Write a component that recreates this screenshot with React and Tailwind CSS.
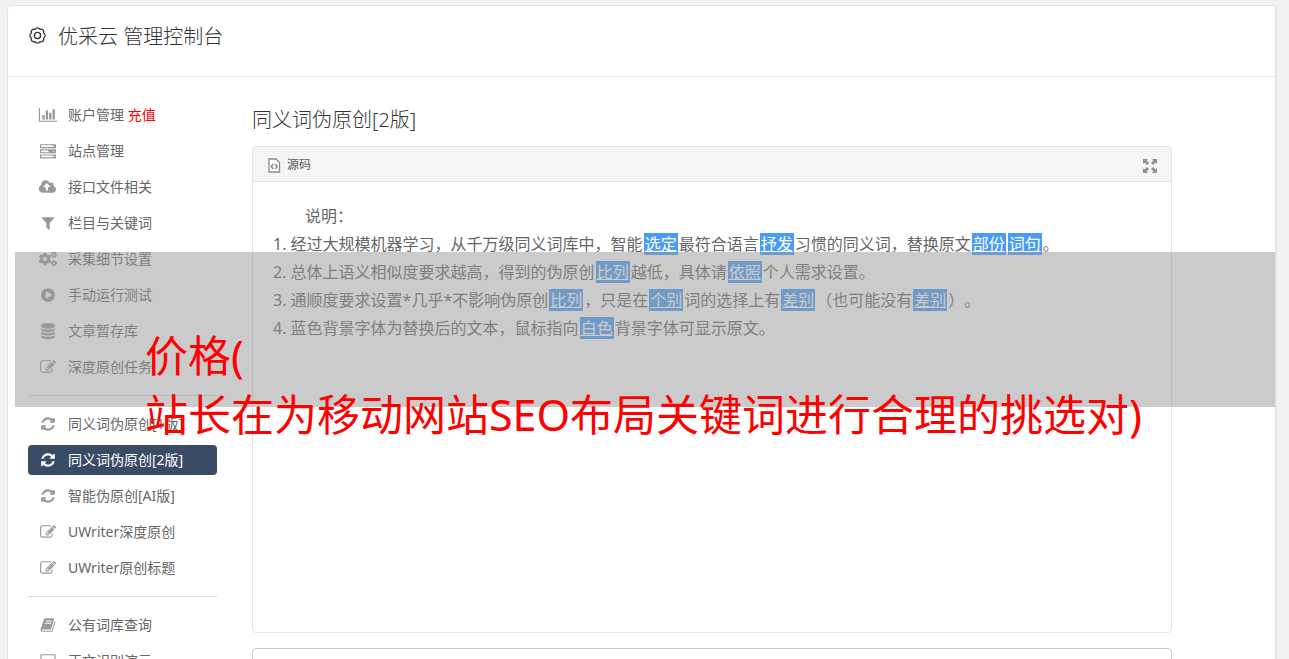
import React, { useState } from "react";
import { FaCogs } from "react-icons/fa";

function Glyph({ d, wide }) {
  return (
    <svg
      viewBox={wide ? "0 0 2048 1792" : "0 0 1792 1792"}
      className={`${wide ? "h-4 w-5" : "h-4 w-4"} shrink-0`}
      fill="currentColor"
      aria-hidden="true"
    >
      <path fillRule="evenodd" d={d} />
    </svg>
  );
}

const ICONS = {
  chart: {
    wide: true,
    d: "M640 896v512h-256v-512h256zm384-512v1024h-256v-1024h256zm1024 1152v128h-2048v-1536h128v1408h1920zm-640-896v768h-256v-768h256zm384-384v1152h-256v-1152h256z",
  },
  server: {
    d: "M0 128h1792v448H0zM128 256v192h1280V256zM1472 288v128h128V288zM0 704h1792v448H0zM128 832v192h832V832zM1472 864v128h128V864zM0 1280h1792v448H0zM128 1408v192h1280v-192zM1472 1440v128h128v-128z",
  },
  upload: {
    wide: true,
    d: "M1280 864q0-14-9-23l-352-352q-9-9-23-9t-23 9l-351 351q-10 12-10 24 0 14 9 23t23 9h224v352q0 13 9.5 22.5t22.5 9.5h192q13 0 22.5-9.5t9.5-22.5v-352h224q13 0 22.5-9.5t9.5-22.5zm640 288q0 159-112.5 271.5t-271.5 112.5h-1088q-185 0-316.5-131.5t-131.5-316.5q0-130 70-240t188-165q-2-30-2-43 0-212 150-362t362-150q156 0 285.5 87t188.5 231q71-62 166-62 106 0 181 75t75 181q0 76-41 138 130 31 213.5 135.5t83.5 238.5z",
  },
  filter: {
    d: "M1595 295q17 41-14 70l-493 493v742q0 42-39 59-13 5-25 5-27 0-45-19l-256-256q-19-19-19-45v-486l-493-493q-31-29-14-70 17-39 59-39h1280q42 0 59 39z",
  },
  play: {
    d: "M896 128q209 0 385.5 103t279.5 279.5 103 385.5-103 385.5-279.5 279.5-385.5 103-385.5-103-279.5-279.5-103-385.5 103-385.5 279.5-279.5 385.5-103zm384 823q32-18 32-55t-32-55l-544-320q-31-19-64-1-32 19-32 56v640q0 37 32 56 16 8 32 8 17 0 32-9z",
  },
  database: {
    d: "M896 768q237 0 443-43t325-127v170q0 69-103 128t-280 93.5-385 34.5-385-34.5-280-93.5-103-128v-170q119 84 325 127t443 43zm0 768q237 0 443-43t325-127v170q0 69-103 128t-280 93.5-385 34.5-385-34.5-280-93.5-103-128v-170q119 84 325 127t443 43zm0-384q237 0 443-43t325-127v170q0 69-103 128t-280 93.5-385 34.5-385-34.5-280-93.5-103-128v-170q119 84 325 127t443 43zm0-1152q208 0 385 34.5t280 93.5 103 128v128q0 69-103 128t-280 93.5-385 34.5-385-34.5-280-93.5-103-128v-128q0-69 103-128t280-93.5 385-34.5z",
  },
  edit: {
    d: "M888 1184l116-116-152-152-116 116v56h96v96h56zm440-720q-16-16-33 1l-350 350q-17 17-1 33t33-1l350-350q17-17 1-33zm80 594v190q0 119-84.5 203.5t-203.5 84.5h-832q-119 0-203.5-84.5t-84.5-203.5v-832q0-119 84.5-203.5t203.5-84.5h832q63 0 117 25 15 7 18 23 3 17-9 29l-49 49q-14 14-32 8-23-6-45-6h-832q-66 0-113 47t-47 113v832q0 66 47 113t113 47h832q66 0 113-47t47-113v-126q0-13 9-22l64-64q15-15 35-7t20 29zm-96-738l288 288-672 672h-288v-288zm444 132l-92 92-288-288 92-92q28-28 68-28t68 28l152 152q28 28 28 68t-28 68z",
  },
  refresh: {
    d: "M1639 1056q0 5-1 7-64 268-268 434.5t-478 166.5q-146 0-282.5-55t-243.5-157l-129 129q-19 19-45 19t-45-19-19-45v-448q0-26 19-45t45-19h448q26 0 45 19t19 45-19 45l-137 137q71 66 161 102t187 36q134 0 250-65t186-179q11-17 53-117 8-23 30-23h192q13 0 22.5 9.5t9.5 22.5zm25-800v448q0 26-19 45t-45 19h-448q-26 0-45-19t-19-45 19-45l138-138q-148-137-349-137-134 0-250 65t-186 179q-11 17-53 117-8 23-30 23h-199q-13 0-22.5-9.5t-9.5-22.5v-7q65-268 270-434.5t480-166.5q146 0 284 55.5t245 156.5l130-129q19-19 45-19t45 19 19 45z",
  },
  book: {
    d: "M1703 478q40 57 18 129l-275 906q-19 64-76.5 107.5t-122.5 43.5h-923q-77 0-148.5-53.5t-99.5-131.5q-24-67-2-127 0-4 3-27t4-37q1-8-3-21.5t-3-19.5q2-11 8-21t16.5-23.5 16.5-23.5q23-38 45-91.5t30-91.5q3-10 .5-30t-.5-28q3-11 17-28t17-23q21-36 42-92t25-90q1-9-2.5-32t.5-28q4-13 22-30.5t22-22.5q19-26 42.5-84.5t27.5-96.5q1-8-3-25.5t-2-26.5q2-8 9-18t18-23 17-21q8-12 16.5-30.5t15-35 16-36 19.5-32 26.5-23.5 36-11.5 47.5 5.5l-1 3q38-9 51-9h761q74 0 114 56t18 130l-274 906q-36 119-71.5 153.5t-128.5 34.5h-869q-27 0-38 15-11 16-1 43 24 70 144 70h923q29 0 56-15.5t35-41.5l300-987q7-22 5-57 38 15 59 43zm-1064 2q-4 13 2 22.5t20 9.5h608q13 0 25.5-9.5t16.5-22.5l21-64q4-13-2-22.5t-20-9.5h-608q-13 0-25.5 9.5t-16.5 22.5zm-83 256q-4 13 2 22.5t20 9.5h608q13 0 25.5-9.5t16.5-22.5l21-64q4-13-2-22.5t-20-9.5h-608q-13 0-25.5 9.5t-16.5 22.5z",
  },
  laptop: {
    wide: true,
    d: "M236 128h1576q66 0 66 66v1020q0 66-66 66H236q-66 0-66-66V194q0-66 66-66zM298 256v896h1452V256zM0 1408h2048v96q0 96-160 96H160q-160 0-160-96z",
  },
};

const NAV_GROUPS = [
  [
    { label: "账户管理", icon: "chart", extra: "充值" },
    { label: "站点管理", icon: "server" },
    { label: "接口文件相关", icon: "upload" },
    { label: "栏目与关键词", icon: "filter" },
    { label: "采集细节设置", icon: "cogs" },
    { label: "手动运行测试", icon: "play" },
    { label: "文章暂存库", icon: "database" },
    { label: "深度原创任务", icon: "edit" },
  ],
  [
    { label: "同义词伪原创[1版]", icon: "refresh" },
    { label: "同义词伪原创[2版]", icon: "refresh" },
    { label: "智能伪原创[AI版]", icon: "refresh" },
    { label: "UWriter深度原创", icon: "edit" },
    { label: "UWriter原创标题", icon: "edit" },
  ],
  [
    { label: "公有词库查询", icon: "book" },
    { label: "正文识别演示", icon: "laptop" },
  ],
];

function NavIcon({ name }) {
  if (name === "cogs") {
    return <FaCogs className="h-4 w-[18px]" />;
  }
  const icon = ICONS[name];
  return <Glyph d={icon.d} wide={icon.wide} />;
}

function NavItem({ item, active, onSelect }) {
  return (
    <li>
      <a
        href="#"
        onClick={(event) => {
          event.preventDefault();
          onSelect(item.label);
        }}
        className={`flex h-[30px] items-center gap-2.5 rounded px-2.5 text-sm ${
          active ? "bg-[#3a4b66] text-white" : "text-[#666]"
        }`}
      >
        <span className={`flex w-5 shrink-0 justify-center ${active ? "text-white" : "text-[#999]"}`}>
          <NavIcon name={item.icon} />
        </span>
        <span className="whitespace-nowrap">
          {item.label}
          {item.extra ? <span className="text-[#f00]"> {item.extra}</span> : null}
        </span>
      </a>
    </li>
  );
}

function Swap({ children }) {
  return <span className="mx-px bg-[#489cf6] px-px text-white underline">{children}</span>;
}

function App() {
  const [current, setCurrent] = useState("同义词伪原创[2版]");
  const [expanded, setExpanded] = useState(false);

  return (
    <div className="relative h-screen overflow-hidden bg-[#f1f1f1] pt-[5px] pr-3 pl-[7px] font-['Noto_Sans','Noto_Sans_CJK_SC',sans-serif] text-[#666]">
      <div className="min-h-screen rounded-t border border-r-2 border-[#e5e5e5] bg-white">
        <header className="flex h-[71px] items-start gap-2.5 border-b border-[#e5e5e5] px-5 pt-[17px] text-[#333]">
          <svg viewBox="0 0 20 20" className="mt-[3px] h-5 w-5" fill="none" stroke="currentColor" aria-hidden="true">
            <g transform="translate(.5 .5)" strokeWidth="1.3" strokeLinejoin="round">
              <circle cx="9" cy="9" r="3.1" />
              <path d="M15.1 6.5A2.75 2.75 0 0 1 15.1 11.5A2.75 2.75 0 0 1 11.5 15.1A2.75 2.75 0 0 1 6.5 15.1A2.75 2.75 0 0 1 2.9 11.5A2.75 2.75 0 0 1 2.9 6.5A2.75 2.75 0 0 1 6.5 2.9A2.75 2.75 0 0 1 11.5 2.9A2.75 2.75 0 0 1 15.1 6.5Z" />
            </g>
          </svg>
          <h1 className="text-xl font-light">优采云 管理控制台</h1>
        </header>

        <div className="flex gap-[35px] pt-[23px] pl-5">
          <nav className="w-[189px] shrink-0">
            {NAV_GROUPS.map((group, index) => (
              <ul
                key={group[0].label}
                className={`space-y-1.5 ${index > 0 ? "mt-[13px] border-t border-[#ddd] pt-[13px]" : ""}`}
              >
                {group.map((item) => (
                  <NavItem
                    key={item.label}
                    item={item}
                    active={item.label === current}
                    onSelect={setCurrent}
                  />
                ))}
              </ul>
            ))}
          </nav>

          <main className="max-w-[920px] min-w-0 flex-1 pt-1.5">
            <h2 className="text-xl font-light text-[#333]">同义词伪原创[2版]</h2>

            <section className="mt-3 overflow-hidden rounded border border-[#e5e5e5]">
              <div className="flex h-[35px] items-center gap-2 border-b border-[#e5e5e5] bg-[#f5f5f5] px-3.5 pt-0.5">
                <button type="button" className="flex items-center gap-1.5 text-xs text-[#555]">
                  <svg viewBox="0 0 14 16" className="h-4 w-3.5" fill="none" stroke="#8a8a8a" aria-hidden="true">
                    <path d="M2 2h7l3.5 3.5V15H2z" fill="#fff" strokeWidth="1.3" />
                    <path d="M6.2 7L4.3 9.5l1.9 2.5M8.3 7l1.9 2.5L8.3 12" strokeWidth="1.5" />
                  </svg>
                  源码
                </button>
                <button
                  type="button"
                  aria-label="全屏"
                  onClick={() => setExpanded(!expanded)}
                  className="ml-auto pt-0.5 text-[#909090]"
                >
                  <svg viewBox="0 0 14 14" className="h-3.5 w-3.5" fill="currentColor" aria-hidden="true">
                    <path d="M0 0h5L3.5 1.5l2.5 2.5-2 2L1.5 3.5 0 5zM14 0v5l-1.5-1.5L10 6 8 4l2.5-2.5L9 0zM0 14V9l1.5 1.5L4 8l2 2-2.5 2.5L5 14zM14 14H9l1.5-1.5L8 10l2-2 2.5 2.5L14 9z" />
                  </svg>
                </button>
              </div>

              <div className={`px-5 py-5 text-base leading-7 [text-spacing-trim:space-all] ${expanded ? "min-h-screen" : "min-h-[450px]"}`}>
                <p className="indent-8">说明：</p>
                <ol className="list-inside list-decimal">
                  <li>
                    经过大规模机器学习，从千万级同义词库中，智能<Swap>选定</Swap>最符合语言<Swap>抒发</Swap>
                    习惯的同义词，替换原文<Swap>部份</Swap><Swap>词句</Swap>。
                  </li>
                  <li>
                    总体上语义相似度要求越高，得到的伪原创<Swap>比列</Swap>越低，具体请<Swap>依照</Swap>个人需求设置。
                  </li>
                  <li>
                    通顺度要求设置*几乎*不影响伪原创<Swap>比列</Swap>，只是在<Swap>个别</Swap>词的选择上有
                    <Swap>差别</Swap>（也可能没有<Swap>差别</Swap>）。
                  </li>
                  <li>
                    蓝色背景字体为替换后的文本，鼠标指向<Swap>白色</Swap>背景字体可显示原文。
                  </li>
                </ol>
              </div>
            </section>

            <textarea
              aria-label="原文"
              rows={5}
              className="mt-[15px] block w-full resize-none rounded border border-[#ccc] bg-white px-3 py-2 outline-none"
            />
          </main>
        </div>
      </div>

      <div className="pointer-events-none absolute top-[252px] right-3.5 left-[15px] h-[155px] bg-[#979797]/50 pt-[74px] pl-[130px] text-[43px] leading-[59px] whitespace-nowrap text-[#f00]">
        <p>价格(</p>
        <p>站长在为移动网站SEO布局关键词进行合理的挑选对)</p>
      </div>
    </div>
  );
}

export default App;
